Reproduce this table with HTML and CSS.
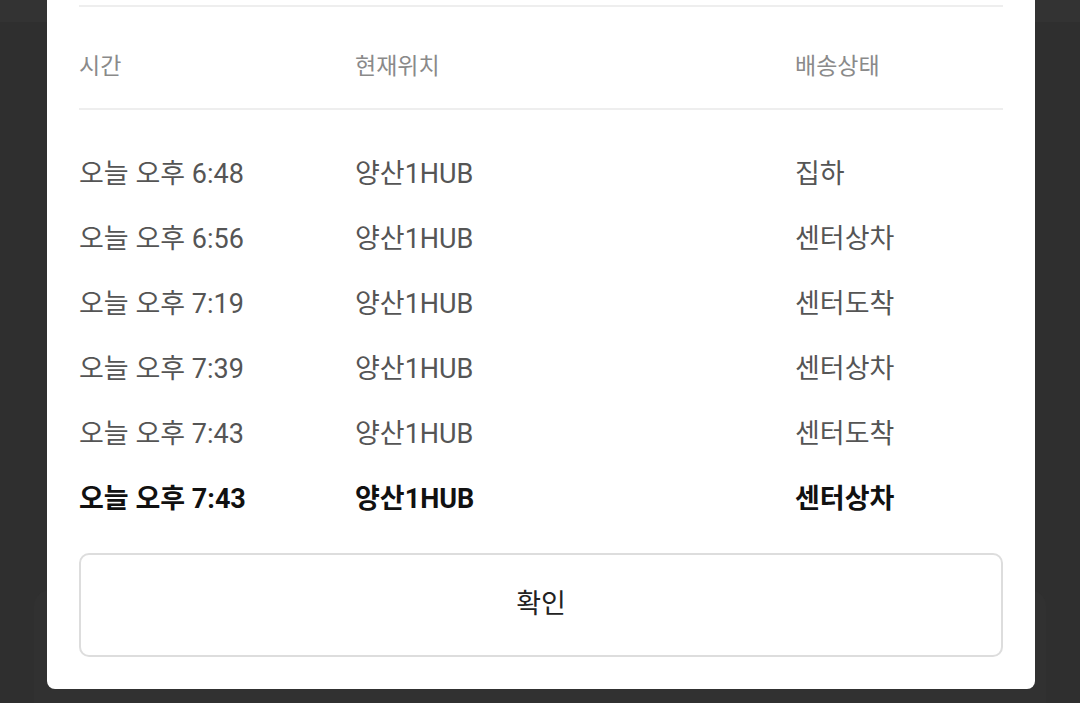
FILE: index.html
```html
<!DOCTYPE html>
<html lang="ko">
<head>
<meta charset="utf-8">
<link rel="stylesheet" href="styles.css">
</head>
<body>
<div class="screen">
  <div class="topbar"></div>
  <div class="backcard"></div>
  <div class="modal">
    <div class="table">
      <div class="head">
        <div>시간</div><div>현재위치</div><div>배송상태</div>
      </div>
      <div class="rows">
        <div class="row"><div>오늘 오후 6:48</div><div>양산1HUB</div><div>집하</div></div>
        <div class="row"><div>오늘 오후 6:56</div><div>양산1HUB</div><div>센터상차</div></div>
        <div class="row"><div>오늘 오후 7:19</div><div>양산1HUB</div><div>센터도착</div></div>
        <div class="row"><div>오늘 오후 7:39</div><div>양산1HUB</div><div>센터상차</div></div>
        <div class="row"><div>오늘 오후 7:43</div><div>양산1HUB</div><div>센터도착</div></div>
        <div class="row current"><div>오늘 오후 7:43</div><div>양산1HUB</div><div>센터상차</div></div>
      </div>
    </div>
    <button class="confirm">확인</button>
  </div>
</div>
</body>
</html>
```
FILE: styles.css
```css
* { box-sizing: border-box; }
html, body { margin: 0; padding: 0; }
body {
  font-family: Roboto, "Noto Sans CJK KR", sans-serif;
  background: #2f2f2f;
}
.screen {
  position: relative;
  width: 1080px;
  height: 703px;
  overflow: hidden;
  background: #2f2f2f;
}
.topbar {
  height: 22px;
  background: #333333;
}
.backcard {
  position: absolute;
  left: 34px;
  right: 34px;
  top: 590px;
  height: 200px;
  border-radius: 16px;
  background: #313131;
}
.modal {
  position: absolute;
  left: 47px;
  width: 988px;
  bottom: 14px;
  background: #fff;
  border-radius: 8px;
  padding: 80px 32px 32px;
}
.table { width: 100%; }
.head, .row {
  display: grid;
  grid-template-columns: 276px 440px 1fr;
}
.head {
  border-top: 2px solid #eeeeee;
  border-bottom: 2px solid #eeeeee;
  padding: 44px 0 25px;
  font-size: 23px;
  line-height: 32px;
  color: #8a8a8a;
}
.rows { padding-top: 32px; }
.row {
  height: 65px;
  line-height: 65px;
  font-size: 27px;
  color: #555555;
}
.row.current {
  color: #111111;
  font-weight: 700;
}
.confirm {
  display: block;
  width: 100%;
  height: 104px;
  margin-top: 21px;
  background: #fff;
  border: 2px solid #dddddd;
  border-radius: 10px;
  font-family: Roboto, "Noto Sans CJK KR", sans-serif;
  font-size: 27px;
  color: #222;
  padding: 0 0 8px;
}
```
